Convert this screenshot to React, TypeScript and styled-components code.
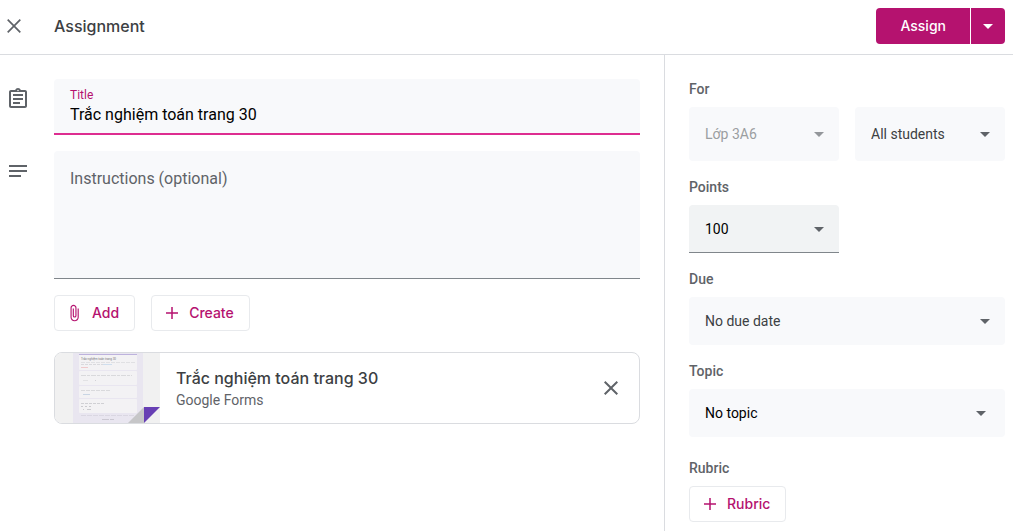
import React from "react";
import styled, { createGlobalStyle } from "styled-components";

const GlobalStyle = createGlobalStyle`
  * {
    box-sizing: border-box;
  }
  body {
    margin: 0;
    background: #fff;
    color: #3c4043;
    font-family: Roboto, "Liberation Sans", sans-serif;
    font-size: 14px;
    line-height: 20px;
  }
  button,
  input,
  select,
  textarea {
    font: inherit;
    color: inherit;
    margin: 0;
  }
`;

const pink = "#b5126f";
const line = "#dadce0";
const fieldFill = "#f8f9fb";
const displayFont = `Inter, Roboto, sans-serif`;

const Page = styled.div`
  min-height: 100vh;
  display: flex;
  flex-direction: column;
`;

const Header = styled.header`
  display: flex;
  align-items: center;
  padding: 8px 8px 10px 2px;
  border-bottom: 1px solid ${line};
`;

const Heading = styled.h1`
  flex: 1;
  margin: 0 0 0 28px;
  font-family: ${displayFont};
  font-size: 16px;
  line-height: 24px;
  font-weight: 500;
`;

const IconButton = styled.button`
  display: flex;
  padding: 0;
  border: 0;
  background: none;
  color: #5f6368;
  cursor: pointer;
`;

const SplitButton = styled.div`
  display: flex;
  gap: 1px;
  border-radius: 4px;
  overflow: hidden;
`;

const PrimaryButton = styled.button`
  display: flex;
  align-items: center;
  justify-content: center;
  height: 36px;
  padding: 0 24px;
  border: 0;
  background: ${pink};
  color: #fff;
  font-family: ${displayFont};
  font-size: 14px;
  font-weight: 500;
  cursor: pointer;
`;

const MenuButton = styled(PrimaryButton)`
  width: 34px;
  padding: 0;
`;

const Body = styled.div`
  flex: 1;
  display: flex;
`;

const Main = styled.main`
  flex: 1;
  min-width: 0;
  display: flex;
  flex-direction: column;
  gap: 16px;
  padding: 24px 24px 24px 6px;
`;

const FormRow = styled.div`
  display: grid;
  grid-template-columns: 24px 1fr;
  column-gap: 24px;
`;

const RowIcon = styled.div`
  padding-top: 8px;
  color: #5f6368;
`;

const TitleField = styled.div`
  display: flex;
  flex-direction: column;
  height: 56px;
  padding: 8px 16px 0;
  border-bottom: 2px solid #dd2d90;
  border-radius: 4px 4px 0 0;
  background: ${fieldFill};
`;

const FloatingLabel = styled.label`
  font-size: 12px;
  line-height: 16px;
  color: ${pink};
`;

const TitleInput = styled.input`
  width: 100%;
  height: 22px;
  padding: 0;
  border: 0;
  outline: 0;
  background: none;
  color: #000;
  font-size: 16px;
`;

const Instructions = styled.textarea`
  display: block;
  width: 100%;
  height: 128px;
  padding: 16px;
  border: 0;
  border-bottom: 1px solid #80868b;
  border-radius: 4px 4px 0 0;
  outline: 0;
  resize: none;
  background: ${fieldFill};
  color: #000;
  font-size: 16px;
  line-height: 24px;

  &::placeholder {
    color: #5f6368;
    opacity: 1;
  }
`;

const Actions = styled.div`
  display: flex;
  gap: 16px;
  padding-left: 48px;
`;

const OutlineButton = styled.button`
  display: flex;
  align-items: center;
  gap: 8px;
  height: 36px;
  padding: 0 15px 0 11px;
  border: 1px solid #e8eaed;
  border-radius: 4px;
  background: #fff;
  color: ${pink};
  font-family: ${displayFont};
  font-size: 14px;
  font-weight: 500;
  cursor: pointer;
`;

const Attachment = styled.article`
  display: flex;
  align-items: center;
  height: 72px;
  margin: 5px 0 0 48px;
  padding-right: 16px;
  border: 1px solid ${line};
  border-radius: 8px;
  overflow: hidden;
`;

const AttachmentText = styled.div`
  flex: 1;
  min-width: 0;
  padding: 0 16px;
`;

const AttachmentName = styled.a`
  display: block;
  color: #3c4043;
  font-family: ${displayFont};
  font-size: 16px;
  line-height: 24px;
  font-weight: 500;
  text-decoration: none;
`;

const AttachmentKind = styled.div`
  color: #5f6368;
`;

const Sidebar = styled.aside`
  width: 349px;
  display: flex;
  flex-direction: column;
  align-items: flex-start;
  gap: 16px;
  padding: 24px 8px 8px 24px;
  border-left: 1px solid ${line};
`;

const Group = styled.div`
  display: grid;
  grid-template-columns: 1fr 1fr;
  gap: 8px 16px;
  width: 100%;
`;

const RubricGroup = styled.div`
  display: flex;
  flex-direction: column;
  align-items: flex-start;
  gap: 8px;
  padding-top: 5px;
`;

const groupLabel = `
  grid-column: 1 / -1;
  color: #5f6368;
  font-weight: 500;
`;

const GroupLabel = styled.label`
  ${groupLabel}
`;

const GroupTitle = styled.div`
  ${groupLabel}
`;

const SelectBox = styled.div<{ $wide?: boolean; $inset?: number; $muted?: boolean }>`
  position: relative;
  grid-column: ${(p) => (p.$wide ? "1 / -1" : "auto")};
  color: #5f6368;

  svg {
    position: absolute;
    top: calc(50% - 12px);
    right: ${(p) => p.$inset ?? 8}px;
    opacity: ${(p) => (p.$muted ? 0.65 : 1)};
    pointer-events: none;
  }
`;

const Select = styled.select<{ $tall?: boolean; $active?: boolean; $ink?: string }>`
  display: block;
  appearance: none;
  width: 100%;
  height: ${(p) => (p.$tall ? 54 : 48)}px;
  padding: 0 32px 0 16px;
  border: 0;
  border-bottom: ${(p) => (p.$active ? "1px solid #80868b" : "0")};
  border-radius: ${(p) => (p.$active ? "4px 4px 0 0" : "4px")};
  outline: 0;
  background: ${(p) => (p.$active ? "#f1f3f4" : fieldFill)};
  color: ${(p) => p.$ink ?? "#3c4043"};
  opacity: 1;
`;

const Glyph = ({ d, size = 24 }: { d: string; size?: number }) => (
  <svg width={size} height={size} viewBox="0 0 24 24" fill="currentColor" aria-hidden="true">
    <path d={d} />
  </svg>
);

const paths = {
  close:
    "M19 6.41 17.59 5 12 10.59 6.41 5 5 6.41 10.59 12 5 17.59 6.41 19 12 13.41 17.59 19 19 17.59 13.41 12z",
  arrow: "m7 10 5 5 5-5z",
  plus: "M20 13h-7v7h-2v-7H4v-2h7V4h2v7h7v2z",
  clip: "M15.5 6v11.5c0 2.21-1.79 4-4 4s-4-1.79-4-4V5a2.5 2.5 0 0 1 5 0v10.5c0 .55-.45 1-1 1s-1-.45-1-1V6H9v9.5a2.5 2.5 0 0 0 5 0V5c0-2.21-1.79-4-4-4S6 2.79 6 5v12.5c0 3.04 2.46 5.5 5.5 5.5s5.5-2.46 5.5-5.5V6h-1.5z",
  assignment:
    "M7 15h7v2H7zm0-4h10v2H7zm0-4h10v2H7zm12-4h-4.18C14.4 1.84 13.3 1 12 1s-2.4.84-2.82 2H5c-1.1 0-2 .9-2 2v14c0 1.1.9 2 2 2h14c1.1 0 2-.9 2-2V5c0-1.1-.9-2-2-2zm-7-.25c.41 0 .75.34.75.75s-.34.75-.75.75-.75-.34-.75-.75.34-.75.75-.75zM19 19H5V5h14v14z",
  notes: "M3 18h12v-2H3v2zM3 6v2h18V6H3zm0 7h18v-2H3v2z",
};

const CloseThin = () => (
  <svg width="24" height="24" viewBox="0 0 24 24" fill="none" stroke="currentColor" strokeWidth="1.7" aria-hidden="true">
    <path d="M5.7 5.7l12.6 12.6M18.3 5.7L5.7 18.3" />
  </svg>
);

const Thumbnail = () => (
  <svg width="105" height="70" viewBox="0 0 105 70" aria-hidden="true">
    <rect width="105" height="70" fill="#f1f1f1" />
    <rect x="18" width="70" height="70" fill="#e9e6f0" />
    <g fill="#f3f2f4">
      <rect x="24" y="1" width="58" height="16" rx="1" />
      <rect x="24" y="18" width="58" height="14" rx="1" />
      <rect x="24" y="33" width="58" height="12" rx="1" />
      <rect x="24" y="46" width="58" height="14" rx="1" />
    </g>
    <rect x="24" y="1" width="58" height="1" fill="#bdb2dd" />
    <text x="26" y="7" fontSize="3" fill="#77777c">Trắc nghiệm toán trang 30</text>
    <g fill="none" strokeWidth="1">
      <path d="M26 9.5h54" stroke="#e0e0e3" strokeDasharray="4 1" />
      <path d="M26 11.5h22" stroke="#d9d9dd" strokeDasharray="3 1" />
      <path d="M48 11.5h9" stroke="#cfdeee" />
      <path d="M26 14.5h7" stroke="#efc9cb" />
      <path d="M26 22.5h51" stroke="#d9d9dc" strokeDasharray="5 1 3 1" />
      <path d="M28 27.5h5" stroke="#e2e2e4" />
      <path d="M40 27.5h1" stroke="#d2d2d6" />
      <path d="M26 37.5h30" stroke="#d9d9dc" strokeDasharray="4 1" />
      <path d="M28 41.5h7" stroke="#c9d5e4" />
      <path d="M26 50.5h24" stroke="#d0d0d4" strokeDasharray="3 1" />
      <path d="M26 53.5h10" stroke="#cacace" strokeDasharray="2 2" />
      <path d="M28 56.5h1m3 0h4" stroke="#cacace" />
      <path d="M26 62.5h54" stroke="#dad7e2" strokeDasharray="5 1" />
      <path d="M47 66.5h12" stroke="#cbc8d2" strokeDasharray="7 1" />
    </g>
    <path d="M73 70 89 54v16z" fill="#c6c6c8" />
    <path d="M89 54h16L89 70z" fill="#673fb4" />
  </svg>
);

type DropdownProps = {
  id: string;
  label?: string;
  value: string;
  wide?: boolean;
  tall?: boolean;
  active?: boolean;
  disabled?: boolean;
  ink?: string;
  inset?: number;
};

const Dropdown = ({ id, label, value, wide, tall, active, disabled, ink, inset }: DropdownProps) => (
  <SelectBox $wide={wide} $inset={inset} $muted={disabled}>
    <Select id={id} aria-label={label} disabled={disabled} $tall={tall} $active={active} $ink={ink}>
      <option>{value}</option>
    </Select>
    <Glyph d={paths.arrow} />
  </SelectBox>
);

export default function App() {
  return (
    <Page>
      <GlobalStyle />
      <Header>
        <IconButton type="button" aria-label="Close">
          <CloseThin />
        </IconButton>
        <Heading>Assignment</Heading>
        <SplitButton>
          <PrimaryButton type="button">Assign</PrimaryButton>
          <MenuButton type="button" aria-label="More assign options">
            <Glyph d={paths.arrow} />
          </MenuButton>
        </SplitButton>
      </Header>
      <Body>
        <Main>
          <FormRow>
            <RowIcon>
              <Glyph d={paths.assignment} />
            </RowIcon>
            <TitleField>
              <FloatingLabel htmlFor="title">Title</FloatingLabel>
              <TitleInput id="title" type="text" defaultValue="Trắc nghiệm toán trang 30" />
            </TitleField>
          </FormRow>
          <FormRow>
            <RowIcon>
              <Glyph d={paths.notes} />
            </RowIcon>
            <Instructions aria-label="Instructions" placeholder="Instructions (optional)" />
          </FormRow>
          <Actions>
            <OutlineButton type="button">
              <Glyph d={paths.clip} size={18} />
              Add
            </OutlineButton>
            <OutlineButton type="button">
              <Glyph d={paths.plus} size={18} />
              Create
            </OutlineButton>
          </Actions>
          <Attachment>
            <Thumbnail />
            <AttachmentText>
              <AttachmentName href="#form">Trắc nghiệm toán trang 30</AttachmentName>
              <AttachmentKind>Google Forms</AttachmentKind>
            </AttachmentText>
            <IconButton type="button" aria-label="Remove attachment">
              <Glyph d={paths.close} />
            </IconButton>
          </Attachment>
        </Main>
        <Sidebar>
          <Group>
            <GroupLabel htmlFor="class">For</GroupLabel>
            <Dropdown id="class" value="Lớp 3A6" tall disabled ink="#9b9ea1" />
            <Dropdown id="students" label="Students" value="All students" tall />
          </Group>
          <Group>
            <GroupLabel htmlFor="points">Points</GroupLabel>
            <Dropdown id="points" value="100" active ink="#000" />
          </Group>
          <Group>
            <GroupLabel htmlFor="due">Due</GroupLabel>
            <Dropdown id="due" value="No due date" wide />
          </Group>
          <Group>
            <GroupLabel htmlFor="topic">Topic</GroupLabel>
            <Dropdown id="topic" value="No topic" wide ink="#000" inset={12} />
          </Group>
          <RubricGroup>
            <GroupTitle>Rubric</GroupTitle>
            <OutlineButton type="button">
              <Glyph d={paths.plus} size={18} />
              Rubric
            </OutlineButton>
          </RubricGroup>
        </Sidebar>
      </Body>
    </Page>
  );
}
